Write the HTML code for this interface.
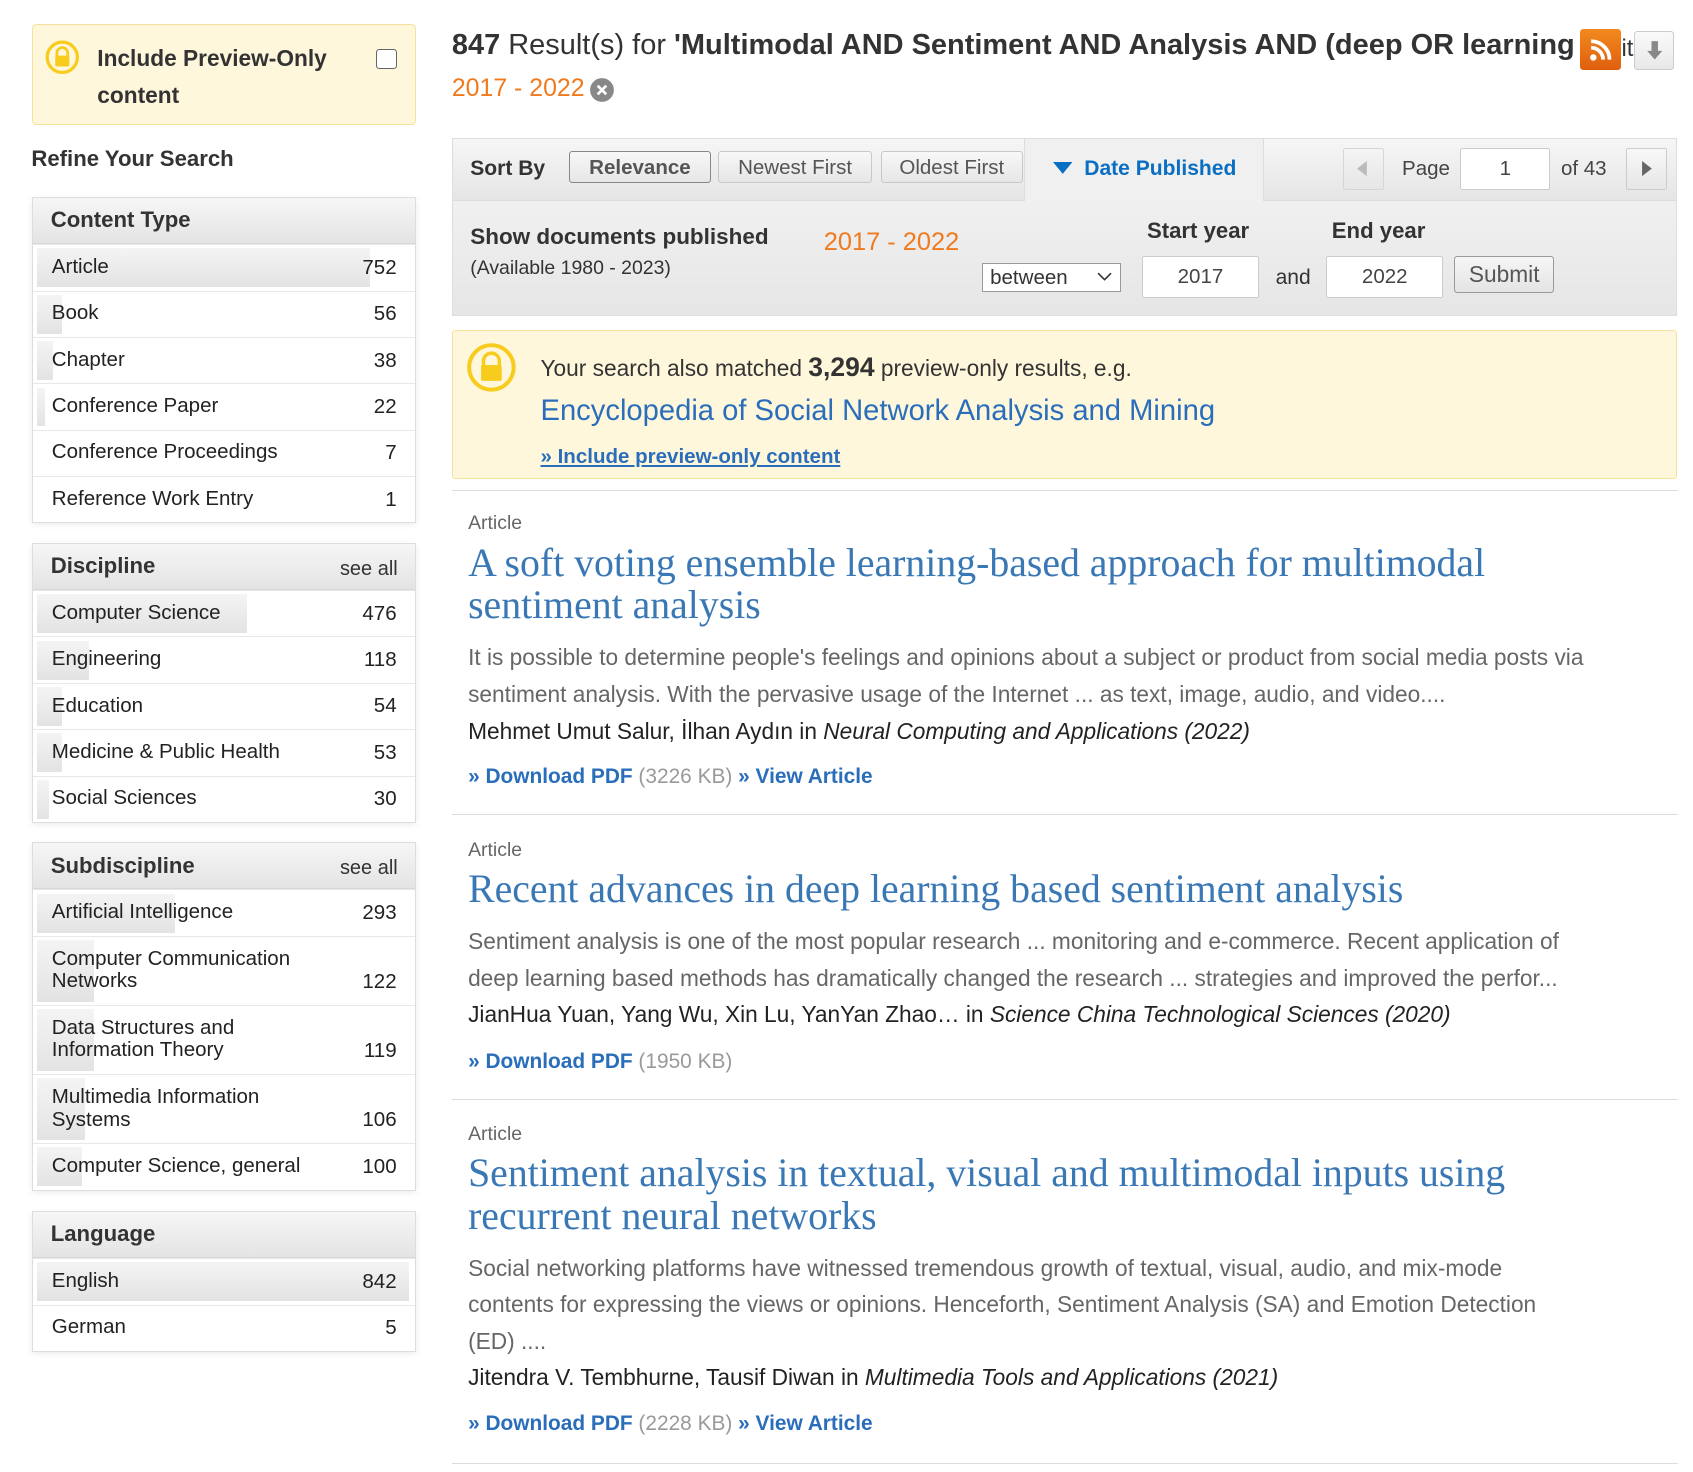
<!DOCTYPE html>
<html><head><meta charset="utf-8"><style>
html,body{margin:0;padding:0;background:#fff;}
body{width:1693px;height:1472px;overflow:hidden;}
#w{zoom:1.081;position:relative;width:1566px;height:1362px;font-family:"Liberation Sans",Arial,sans-serif;color:#222;}
.a{position:absolute;white-space:nowrap;}
.box{position:absolute;left:30px;width:353px;border:1px solid #ddd;box-shadow:0 2px 6px rgba(0,0,0,.08);background:#fff;}
.hd{height:42px;background:linear-gradient(#f6f6f6,#e4e4e4);border-bottom:1px solid #d8d8d8;position:relative;}
.hd b{position:absolute;left:16px;top:9px;font-size:20.5px;color:#333;}
.hd span{position:absolute;right:16px;top:13px;font-size:18.5px;color:#333;}
.r{position:relative;height:42px;border-top:1px solid #e8e8e8;font-size:19px;}
.r:first-of-type{border-top:none}
.bar{position:absolute;left:3px;top:3px;bottom:3px;background:linear-gradient(#f4f4f4,#e3e3e3);}
.r .l{position:absolute;left:17px;top:10px;line-height:21px;}
.r .n{position:absolute;right:17px;bottom:10px;}
.r2{height:63px;}
.btn{position:absolute;top:12px;height:29px;border:1px solid #c8c8c8;border-radius:3px;background:linear-gradient(#f8f8f8,#e6e6e6);font-size:19px;color:#555;text-align:center;line-height:29px;box-sizing:border-box;}
.inp{position:absolute;background:#fff;border:1px solid #ccc;border-radius:2px;text-align:center;font-size:19px;color:#444;box-sizing:border-box;}
.ttl{font-family:"Liberation Serif","Times New Roman",serif;font-size:36.8px;color:#3a78b5;line-height:39px;}
.sn{font-size:21px;color:#666;line-height:34px;}
.au{font-size:21px;color:#222;}
.lk{font-size:19.3px;color:#2a6ebb;font-weight:bold;}
.lk span{color:#999;font-weight:normal;}
.hr{position:absolute;left:418px;width:1134px;height:1px;background:#ddd;}
</style></head><body><div id="w">

<div class="a" style="left:30px;top:22px;width:353px;height:92px;background:#fff7dc;border:1px solid #f6e19c;border-radius:4px;"></div>
<svg class="a" style="left:42px;top:37px" width="32" height="32" viewBox="0 0 32 32"><circle cx="16" cy="16" r="14" fill="none" stroke="#f7cc1c" stroke-width="3"/><path d="M11 15v-3a5 5 0 0 1 10 0v3" fill="none" stroke="#f7cc1c" stroke-width="2.5"/><rect x="9.5" y="14.5" width="13" height="10" rx="1" fill="#f7cc1c"/></svg>
<div class="a" style="left:90px;top:37px;font-size:21px;font-weight:bold;line-height:34px;color:#333;">Include Preview-Only<br>content</div>
<div class="a" style="left:348px;top:45px;width:17px;height:17px;border:1.5px solid #666;border-radius:3px;background:#fff;"></div>

<div class="a" style="left:29px;top:135px;font-size:20.5px;font-weight:bold;color:#333;">Refine Your Search</div>

<div class="box" style="top:182px;">
<div class="hd"><b>Content Type</b></div>
<div class="r"><div class="bar" style="width:308px"></div><div class="l">Article</div><div class="n">752</div></div>
<div class="r"><div class="bar" style="width:23px"></div><div class="l">Book</div><div class="n">56</div></div>
<div class="r"><div class="bar" style="width:15px"></div><div class="l">Chapter</div><div class="n">38</div></div>
<div class="r"><div class="bar" style="width:8px"></div><div class="l">Conference Paper</div><div class="n">22</div></div>
<div class="r"><div class="l">Conference Proceedings</div><div class="n">7</div></div>
<div class="r"><div class="l">Reference Work Entry</div><div class="n">1</div></div>
</div>

<div class="box" style="top:502px;">
<div class="hd"><b>Discipline</b><span>see all</span></div>
<div class="r"><div class="bar" style="width:195px"></div><div class="l">Computer Science</div><div class="n">476</div></div>
<div class="r"><div class="bar" style="width:48px"></div><div class="l">Engineering</div><div class="n">118</div></div>
<div class="r"><div class="bar" style="width:23px"></div><div class="l">Education</div><div class="n">54</div></div>
<div class="r"><div class="bar" style="width:23px"></div><div class="l">Medicine &amp; Public Health</div><div class="n">53</div></div>
<div class="r"><div class="bar" style="width:11px"></div><div class="l">Social Sciences</div><div class="n">30</div></div>
</div>

<div class="box" style="top:779px;">
<div class="hd"><b>Subdiscipline</b><span>see all</span></div>
<div class="r"><div class="bar" style="width:128px"></div><div class="l">Artificial Intelligence</div><div class="n">293</div></div>
<div class="r r2"><div class="bar" style="width:53px"></div><div class="l">Computer Communication<br>Networks</div><div class="n">122</div></div>
<div class="r r2"><div class="bar" style="width:53px"></div><div class="l">Data Structures and<br>Information Theory</div><div class="n">119</div></div>
<div class="r r2"><div class="bar" style="width:45px"></div><div class="l">Multimedia Information<br>Systems</div><div class="n">106</div></div>
<div class="r"><div class="bar" style="width:42px"></div><div class="l">Computer Science, general</div><div class="n">100</div></div>
</div>

<div class="box" style="top:1120px;">
<div class="hd"><b>Language</b></div>
<div class="r"><div class="bar" style="right:6px"></div><div class="l">English</div><div class="n">842</div></div>
<div class="r"><div class="l">German</div><div class="n">5</div></div>
</div>

<div class="a" style="left:418px;top:27px;width:1044px;overflow:hidden;font-size:26.8px;color:#333;"><b>847</b> Result(s) for <b>'Multimodal AND Sentiment AND Analysis AND (deep OR learning</b> wit</div>
<div class="a" style="left:1462px;top:27px;width:38px;height:38px;border-radius:3px;background:linear-gradient(#f28a1e,#e05e0e);"></div>
<svg class="a" style="left:1470px;top:35px" width="22" height="22" viewBox="0 0 22 22"><circle cx="4" cy="18" r="3" fill="#fff"/><path d="M2 9a11 11 0 0 1 11 11M2 3a17 17 0 0 1 17 17" fill="none" stroke="#fff" stroke-width="3.5"/></svg>
<div class="a" style="left:1500px;top:32px;font-size:22px;color:#333;">it</div>
<div class="a" style="left:1512px;top:29px;width:37px;height:36px;border:1px solid #ccc;border-radius:3px;background:linear-gradient(#fafafa,#e8e8e8);box-sizing:border-box;"></div>
<svg class="a" style="left:1522px;top:36px" width="18" height="22" viewBox="0 0 18 22"><path d="M6 2h6v9h4l-7 8-7-8h4z" fill="#888"/></svg>
<div class="a" style="left:418px;top:68px;font-size:23px;color:#f07a1e;">2017 - 2022</div>
<svg class="a" style="left:545px;top:71px" width="24" height="24" viewBox="0 0 24 24"><circle cx="12" cy="12" r="11" fill="#888"/><path d="M8 8l8 8M16 8l-8 8" stroke="#fff" stroke-width="2.5"/></svg>

<div class="a" style="left:418px;top:128px;width:1133px;height:164px;border:1px solid #ddd;background:#ebebeb;box-sizing:border-box;"></div>
<div class="a" style="left:419px;top:129px;width:1131px;height:56px;background:linear-gradient(#f6f6f6,#e5e5e5);border-bottom:1px solid #ddd;"></div>
<div class="a" style="left:419px;top:186px;width:1131px;height:105px;background:linear-gradient(#f0f0f0,#e6e6e6);"></div>
<div class="a" style="left:435px;top:145px;font-size:19.5px;font-weight:bold;color:#333;">Sort By</div>
<div class="btn" style="left:526px;top:140px;width:132px;border-color:#888;font-weight:bold;">Relevance</div>
<div class="btn" style="left:664px;top:140px;width:143px;">Newest First</div>
<div class="btn" style="left:815px;top:140px;width:131px;">Oldest First</div>
<div class="a" style="left:947px;top:129px;width:220px;height:57px;background:#f0f0f0;border-left:1px solid #ddd;border-right:1px solid #ddd;"></div>
<svg class="a" style="left:974px;top:150px" width="18" height="12" viewBox="0 0 18 12"><path d="M0 0h18L9 11z" fill="#0a6fc2"/></svg>
<div class="a" style="left:1003px;top:145px;font-size:19.5px;font-weight:bold;color:#0a6fc2;">Date Published</div>
<div class="a" style="left:1242px;top:137px;width:38px;height:39px;border:1px solid #d6d6d6;border-radius:2px;background:linear-gradient(#f4f4f4,#e6e6e6);box-sizing:border-box;"></div>
<svg class="a" style="left:1254px;top:149px" width="12" height="14"><path d="M10 0v14L1 7z" fill="#bbb"/></svg>
<div class="a" style="left:1297px;top:145px;font-size:19px;color:#444;">Page</div>
<div class="inp" style="left:1351px;top:137px;width:83px;height:39px;line-height:37px;">1</div>
<div class="a" style="left:1444px;top:145px;font-size:19px;color:#444;">of 43</div>
<div class="a" style="left:1504px;top:137px;width:38px;height:39px;border:1px solid #ccc;border-radius:2px;background:linear-gradient(#f8f8f8,#e6e6e6);box-sizing:border-box;"></div>
<svg class="a" style="left:1518px;top:149px" width="12" height="14"><path d="M1 0v14l9-7z" fill="#666"/></svg>

<div class="a" style="left:435px;top:207px;font-size:20.8px;font-weight:bold;color:#333;">Show documents published</div>
<div class="a" style="left:435px;top:238px;font-size:18px;color:#333;">(Available 1980 - 2023)</div>
<div class="a" style="left:762px;top:211px;font-size:23.5px;color:#f07a1e;">2017 - 2022</div>
<div class="a" style="left:908px;top:243px;width:129px;height:27px;border:1px solid #999;background:#fff;box-sizing:border-box;font-size:19px;color:#333;padding-left:7px;line-height:25px;">between</div>
<svg class="a" style="left:1015px;top:251px" width="14" height="10"><path d="M1 2l6 6 6-6" fill="none" stroke="#333" stroke-width="1.5"/></svg>
<div class="a" style="left:1061px;top:202px;font-size:20.5px;font-weight:bold;color:#333;">Start year</div>
<div class="a" style="left:1232px;top:202px;font-size:20.5px;font-weight:bold;color:#333;">End year</div>
<div class="inp" style="left:1056px;top:237px;width:109px;height:39px;line-height:37px;">2017</div>
<div class="a" style="left:1180px;top:246px;font-size:19.5px;color:#333;">and</div>
<div class="inp" style="left:1227px;top:237px;width:108px;height:39px;line-height:37px;">2022</div>
<div class="btn" style="left:1345px;top:237px;width:93px;height:34px;line-height:32px;font-size:21px;border-color:#999;background:linear-gradient(#f6f6f6,#e4e4e4);">Submit</div>

<div class="a" style="left:418px;top:305px;width:1133px;height:138px;background:#fff7dc;border:1px solid #f6e19c;border-radius:3px;box-sizing:border-box;"></div>
<svg class="a" style="left:431px;top:316px" width="47" height="47" viewBox="0 0 32 32"><circle cx="16" cy="16" r="14" fill="none" stroke="#f7cc1c" stroke-width="2.5"/><path d="M11 15v-3a5 5 0 0 1 10 0v3" fill="none" stroke="#f7cc1c" stroke-width="2.2"/><rect x="9.5" y="14.5" width="13" height="10" rx="1" fill="#f7cc1c"/></svg>
<div class="a" style="left:500px;top:326px;font-size:21px;color:#333;">Your search also matched <b style="font-size:24.5px;">3,294</b> preview-only results, e.g.</div>
<div class="a" style="left:500px;top:365px;font-size:27px;color:#2a6ebb;">Encyclopedia of Social Network Analysis and Mining</div>
<div class="a" style="left:500px;top:412px;font-size:19px;color:#2a6ebb;font-weight:bold;text-decoration:underline;">» Include preview-only content</div>

<div class="hr" style="top:453px"></div>

<div class="a" style="left:433px;top:474px;font-size:18px;color:#666;">Article</div>
<div class="a ttl" style="left:433px;top:501px;">A soft voting ensemble learning-based approach for multimodal<br>sentiment analysis</div>
<div class="a sn" style="left:433px;top:591px;">It is possible to determine people's feelings and opinions about a subject or product from social media posts via<br>sentiment analysis. With the pervasive usage of the Internet ... as text, image, audio, and video....</div>
<div class="a au" style="left:433px;top:664px;">Mehmet Umut Salur, İlhan Aydın in <i>Neural Computing and Applications (2022)</i></div>
<div class="a lk" style="left:433px;top:708px;">» Download PDF <span>(3226 KB)</span> » View Article</div>
<div class="hr" style="top:753px"></div>

<div class="a" style="left:433px;top:776px;font-size:18px;color:#666;">Article</div>
<div class="a ttl" style="left:433px;top:803px;">Recent advances in deep learning based sentiment analysis</div>
<div class="a sn" style="left:433px;top:854px;">Sentiment analysis is one of the most popular research ... monitoring and e-commerce. Recent application of<br>deep learning based methods has dramatically changed the research ... strategies and improved the perfor...</div>
<div class="a au" style="left:433px;top:926px;">JianHua Yuan, Yang Wu, Xin Lu, YanYan Zhao… in <i>Science China Technological Sciences (2020)</i></div>
<div class="a lk" style="left:433px;top:971px;">» Download PDF <span>(1950 KB)</span></div>
<div class="hr" style="top:1017px"></div>

<div class="a" style="left:433px;top:1039px;font-size:18px;color:#666;">Article</div>
<div class="a ttl" style="left:433px;top:1066px;">Sentiment analysis in textual, visual and multimodal inputs using<br>recurrent neural networks</div>
<div class="a sn" style="left:433px;top:1156px;">Social networking platforms have witnessed tremendous growth of textual, visual, audio, and mix-mode<br>contents for expressing the views or opinions. Henceforth, Sentiment Analysis (SA) and Emotion Detection<br>(ED) ....</div>
<div class="a au" style="left:433px;top:1262px;">Jitendra V. Tembhurne, Tausif Diwan in <i>Multimedia Tools and Applications (2021)</i></div>
<div class="a lk" style="left:433px;top:1306px;">» Download PDF <span>(2228 KB)</span> » View Article</div>
<div class="hr" style="top:1353px"></div>

</div></body></html>
